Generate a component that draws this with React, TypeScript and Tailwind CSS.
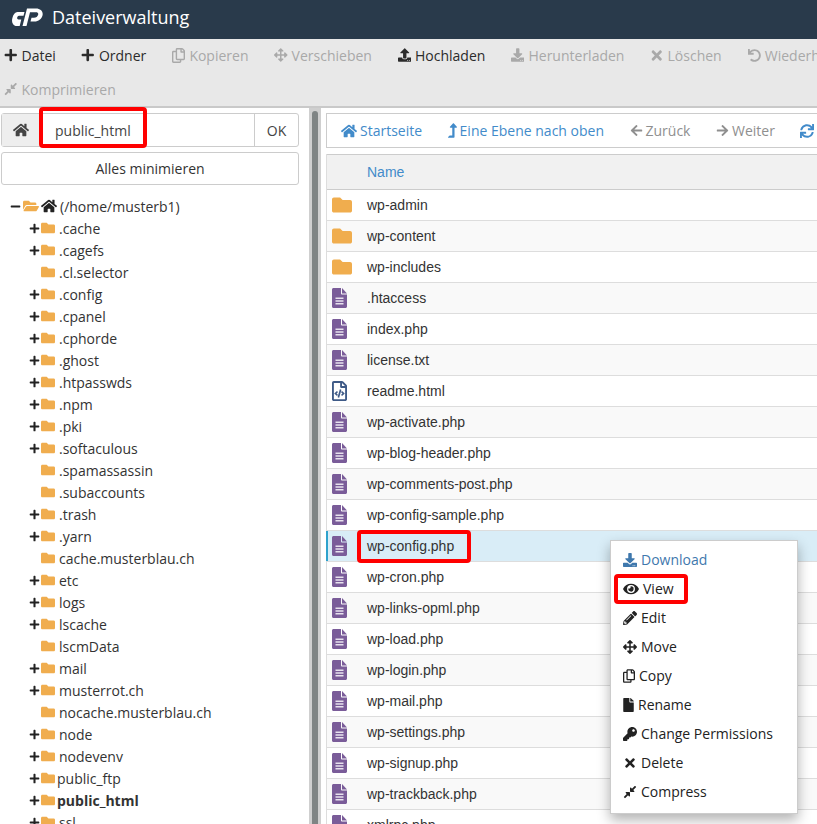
import type { ReactNode } from 'react';
import {
  FaPlus, FaMinus, FaRegCopy, FaArrowsAlt, FaUpload, FaDownload, FaTimes, FaUndo, FaCompressAlt, FaHome,
  FaFolder, FaFolderOpen, FaRegFileCode, FaLevelUpAlt, FaArrowLeft, FaArrowRight, FaSync,
  FaEye, FaPencilAlt, FaFile, FaKey,
} from 'react-icons/fa';

const sans = "font-['Open_Sans',sans-serif]";
const arial = "font-['Liberation_Sans',Arial,sans-serif]";

const folders: [string, boolean][] = [
  ['.cache', true], ['.cagefs', true], ['.cl.selector', false], ['.config', true], ['.cpanel', true],
  ['.cphorde', true], ['.ghost', true], ['.htpasswds', true], ['.npm', true], ['.pki', true],
  ['.softaculous', true], ['.spamassassin', false], ['.subaccounts', false], ['.trash', true], ['.yarn', true],
  ['cache.musterblau.ch', false], ['etc', true], ['logs', true], ['lscache', true], ['lscmData', false],
  ['mail', true], ['musterrot.ch', true], ['nocache.musterblau.ch', false], ['node', true], ['nodevenv', true],
  ['public_ftp', true], ['public_html', true], ['ssl', true],
];

const files = [
  'wp-admin', 'wp-content', 'wp-includes', '.htaccess', 'index.php', 'license.txt', 'readme.html', 'wp-activate.php',
  'wp-blog-header.php', 'wp-comments-post.php', 'wp-config-sample.php', 'wp-config.php', 'wp-cron.php',
  'wp-links-opml.php', 'wp-load.php', 'wp-login.php', 'wp-mail.php', 'wp-settings.php', 'wp-signup.php',
  'wp-trackback.php', 'xmlrpc.php',
];

function TextFileIcon() {
  return (
    <svg width="15" height="20" viewBox="0 0 15 20" className="shrink-0">
      <path fill="#7a5c99" d="M1.500 0H9V5.500C9 6 9.500 6.500 10 6.500H15V18.500C15 19.300 14.300 20 13.500 20H1.500C.7 20 0 19.300 0 18.500V1.500C0 .7 .7 0 1.500 0Z" />
      <path fill="#7a5c99" d="M10 0L15 5.500H10Z" />
      <path fill="#e8e2ee" d="M3.500 9.500H11.500V11H3.500ZM3.500 12.250H11.500V13.750H3.500ZM3.500 15H11.500V16.500H3.500Z" />
    </svg>
  );
}

function ToolItem({ icon, label, off }: { icon: ReactNode; label: string; off?: boolean }) {
  return (
    <div className={`flex items-center gap-[4px] shrink-0 whitespace-nowrap ${off ? 'text-[#a9a9a9]' : 'text-[#2b2b2b]'}`}>
      <span className="w-[13.500px] flex justify-center">{icon}</span>
      <span>{label}</span>
    </div>
  );
}

function NavItem({ icon, label, off }: { icon: ReactNode; label: string; off?: boolean }) {
  return (
    <div className={`flex items-center gap-[3px] shrink-0 whitespace-nowrap ${off ? 'text-[#8f8f8f]' : 'text-[#428bca]'}`}>
      {icon}
      <span>{label}</span>
    </div>
  );
}

function MenuItem({ icon, label, blue }: { icon: ReactNode; label: string; blue?: boolean }) {
  return (
    <div className={`h-[29px] flex items-center gap-[4px] pl-[12px] whitespace-nowrap ${blue ? 'text-[#3f78ad]' : 'text-[#222]'}`}>
      {icon}
      <span>{label}</span>
    </div>
  );
}

export default function App() {
  return (
    <div className={`relative w-[817px] h-[824px] overflow-hidden bg-white flex flex-col text-[14px] text-[#333] ${sans}`}>
      {/* Kopfzeile */}
      <div className="h-[39px] shrink-0 bg-[#293a4b] flex items-center pl-[12px] pb-[5px] gap-[9px] text-white">
        <svg width="31" height="18" viewBox="0 0 31 18" fill="#fff">
          <path d="M5.500 4H12.500L11.500 7.800H7C5 7.800 4.300 11.500 6.500 11.500H9.300L7.700 18H5C1 18-.8 14 .4 10 1.300 6.500 3 4 5.500 4Z" />
          <path d="M15 .5H24C28.500.5 31.500 3.500 30.500 7.500 29.500 11 26.500 13.500 22.500 13.500H18.500L19.500 9.800H22C24 9.800 25.800 8.500 26.200 6.500 26.500 5 25.500 4.200 24 4.200H18L14.500 18H10.500Z" />
        </svg>
        <span className="text-[18px]">Dateiverwaltung</span>
      </div>

      {/* Werkzeugleiste */}
      <div className="h-[69px] shrink-0 bg-[#e8e8e8] border-b-2 border-[#c9c9c9] pl-[4px] overflow-hidden">
        <div className="h-[32px] flex items-center gap-[25.600px]">
          <ToolItem icon={<FaPlus size={14} />} label="Datei" />
          <ToolItem icon={<FaPlus size={14} />} label="Ordner" />
          <ToolItem icon={<FaRegCopy className="w-[13px] h-[15px]" />} label="Kopieren" off />
          <ToolItem icon={<FaArrowsAlt size={14} />} label="Verschieben" off />
          <ToolItem icon={<FaUpload size={14} />} label="Hochladen" />
          <ToolItem icon={<FaDownload size={14} />} label="Herunterladen" off />
          <ToolItem icon={<FaTimes size={15} />} label="Löschen" off />
          <ToolItem icon={<FaUndo size={13} />} label="Wiederherstellen" off />
        </div>
        <div className="h-[36px] flex items-center">
          <ToolItem icon={<FaCompressAlt size={14} />} label="Komprimieren" off />
        </div>
      </div>

      <div className="flex-1 min-h-0 flex">
        {/* Ordnerbaum */}
        <div className="w-[309px] shrink-0 pl-[1px] pr-[10px] pt-[5px] overflow-hidden">
          <div className="h-[34px] flex border border-[#ccc] rounded-[3px] text-[#444]">
            <div className="w-[39px] shrink-0 bg-[#eee] border-r border-[#ccc] flex items-center justify-center text-[#444]">
              <FaHome size={16} />
            </div>
            <div className="flex-1 flex items-center pl-[14px] bg-white">public_html</div>
            <div className="w-[44px] shrink-0 border-l border-[#ccc] flex items-center justify-center">OK</div>
          </div>
          <div className="h-[33px] mt-[5px] border border-[#ccc] rounded-[3px] flex items-center justify-center">Alles minimieren</div>
          <div className="mt-[10px]">
            <div className="h-[22px] flex items-center pl-[9px]">
              <FaMinus size={11} className="text-[#222]" />
              <FaFolderOpen size={16} className="ml-[2px] text-[#f0ad4e]" />
              <FaHome size={16} className="ml-[2px] text-[#222]" />
              <span className="ml-[3px] whitespace-nowrap">(/home/musterb1)</span>
            </div>
            {folders.map(([name, expandable]) => (
              <div key={name} className="h-[22px] flex items-center pl-[28px]">
                <span className="w-[10px] shrink-0">{expandable && <FaPlus size={11} className="text-[#222]" />}</span>
                <FaFolder size={14} className="ml-[2px] shrink-0 text-[#f0ad4e]" />
                <span className={`whitespace-nowrap ${name.startsWith('public') ? 'ml-[2px]' : 'ml-[4px]'} ${name === 'public_html' ? 'font-bold' : ''}`}>{name}</span>
              </div>
            ))}
          </div>
        </div>

        {/* Trenner */}
        <div className="w-[12px] shrink-0 bg-[#cfcfcf] flex">
          <div className="ml-[3px] mt-[3px] w-[6px] bg-[#7f8484] rounded-t-[3px]" />
        </div>

        {/* Dateiliste */}
        <div className="flex-1 min-w-0 pl-[5px] pt-[5px] overflow-hidden">
          <div className="h-[35px] w-[600px] border border-[#ccc] flex items-center gap-[25.500px] pl-[14px]">
            <NavItem icon={<FaHome size={16} />} label="Startseite" />
            <NavItem icon={<FaLevelUpAlt className="w-[9px] h-[15px]" />} label="Eine Ebene nach oben" />
            <NavItem icon={<FaArrowLeft size={13} />} label="Zurück" off />
            <NavItem icon={<FaArrowRight size={13} />} label="Weiter" off />
            <NavItem icon={<FaSync size={14} />} label="Neu laden" />
          </div>
          <div className={`mt-[6px] w-[600px] border-l border-[#ddd] ${arial}`}>
            <div className="h-[36px] bg-[#f1f1f1] border-y border-[#ccc] flex items-center pl-[40px] text-[#428bca]">Name</div>
            {files.map((name, i) => {
              const selected = name === 'wp-config.php';
              const isDir = i < 3;
              return (
                <div
                  key={name}
                  className={`h-[31px] flex items-center border-b border-[#ddd] relative ${selected ? 'bg-[#d9edf7]' : i % 2 ? 'bg-[#f9f9f9]' : 'bg-white'}`}
                >
                  {selected && <div className="absolute left-[-1px] top-0 bottom-0 w-[2px] bg-[#2ea2cc]" />}
                  <span className="w-[40px] shrink-0 flex pl-[5px]">
                    {isDir ? (
                      <FaFolder size={20} className="text-[#f0ad4e]" />
                    ) : name === 'readme.html' ? (
                      <FaRegFileCode className="w-[15px] h-[20px] text-[#3e5a87]" />
                    ) : (
                      <TextFileIcon />
                    )}
                  </span>
                  <span>{name}</span>
                </div>
              );
            })}
          </div>
        </div>
      </div>

      {/* Kontextmenü */}
      <div className="absolute left-[610px] top-[540px] w-[188px] h-[274px] bg-white border border-[#ccc] shadow-[0_6px_12px_rgba(0,0,0,0.3)] pt-[4px] text-[14px]">
        <MenuItem icon={<FaDownload size={14} />} label="Download" blue />
        <MenuItem icon={<FaEye className="w-[16px] h-[14px]" />} label="View" />
        <MenuItem icon={<FaPencilAlt size={14} />} label="Edit" />
        <MenuItem icon={<FaArrowsAlt size={14} />} label="Move" />
        <MenuItem icon={<FaRegCopy className="w-[12px] h-[14px]" />} label="Copy" />
        <MenuItem icon={<FaFile className="w-[11px] h-[14px]" />} label="Rename" />
        <MenuItem icon={<FaKey size={14} />} label="Change Permissions" />
        <MenuItem icon={<FaTimes size={14} />} label="Delete" />
        <MenuItem icon={<FaCompressAlt size={14} />} label="Compress" />
      </div>

      {/* Rote Markierungen */}
      <div className="absolute left-[39px] top-[107px] w-[108px] h-[41px] border-[4px] border-[#f00] rounded-[4px]" />
      <div className="absolute left-[357px] top-[530px] w-[114px] h-[33px] border-[4px] border-[#f00] rounded-[4px]" />
      <div className="absolute left-[614px] top-[574px] w-[74px] h-[30px] border-[4px] border-[#f00] rounded-[4px]" />
    </div>
  );
}
